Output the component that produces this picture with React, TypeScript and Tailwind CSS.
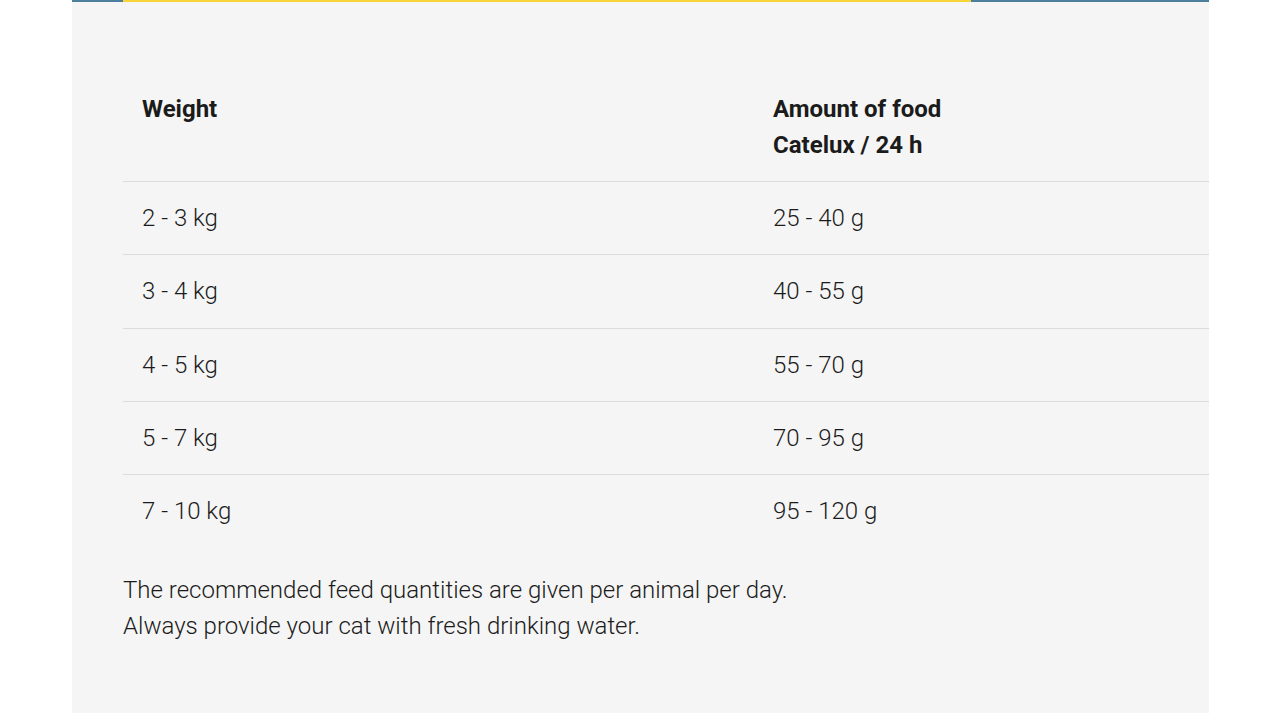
import React from "react";

const rows: [string, string][] = [
    ["2 - 3 kg", "25 - 40 g"],
    ["3 - 4 kg", "40 - 55 g"],
    ["4 - 5 kg", "55 - 70 g"],
    ["5 - 7 kg", "70 - 95 g"],
    ["7 - 10 kg", "95 - 120 g"],
];

const App: React.FC = () => {
    return (
        <div className="w-full min-h-[720px] bg-white" style={{fontFamily: 'Roboto, "Noto Sans", sans-serif'}}>
            <div className="ml-[72px] w-[1137px] h-[713px] bg-[#f5f5f5] flex flex-col">
                <div className="flex h-[2px]">
                    <div className="w-[51px] bg-[#4b7f9b]"/>
                    <div className="w-[848px] bg-[#f7d438]"/>
                    <div className="flex-1 bg-[#4b7f9b]"/>
                </div>
                <div className="pl-[51px] pt-[71px] text-[#1b1b1b]">
                    <table className="w-[1086px] border-collapse text-left">
                        <thead>
                        <tr className="border-b border-[#dcdcdc]">
                            <th className="w-[631px] pl-[19px] pt-[18px] pb-[18px] align-top text-[24px] leading-[36px] font-bold">Weight</th>
                            <th className="pl-[19px] pt-[18px] pb-[18px] align-top text-[24px] leading-[36px] font-bold">
                                Amount of food<br/>Catelux / 24 h
                            </th>
                        </tr>
                        </thead>
                        <tbody>
                        {rows.map(([w, a], i) => (
                            <tr key={w} className={i < rows.length - 1 ? 'border-b border-[#dcdcdc]' : ''}>
                                <td className="pl-[19px] py-[18px] text-[24px] leading-[36.25px] font-light">{w}</td>
                                <td className="pl-[19px] py-[18px] text-[24px] leading-[36.25px] font-light">{a}</td>
                            </tr>
                        ))}
                        </tbody>
                    </table>
                    <p className="mt-[25px] text-[24px] leading-[36px] font-light">
                        The recommended feed quantities are given per animal per day.<br/>
                        Always provide your cat with fresh drinking water.
                    </p>
                </div>
            </div>
        </div>
    );
};

export default App;
